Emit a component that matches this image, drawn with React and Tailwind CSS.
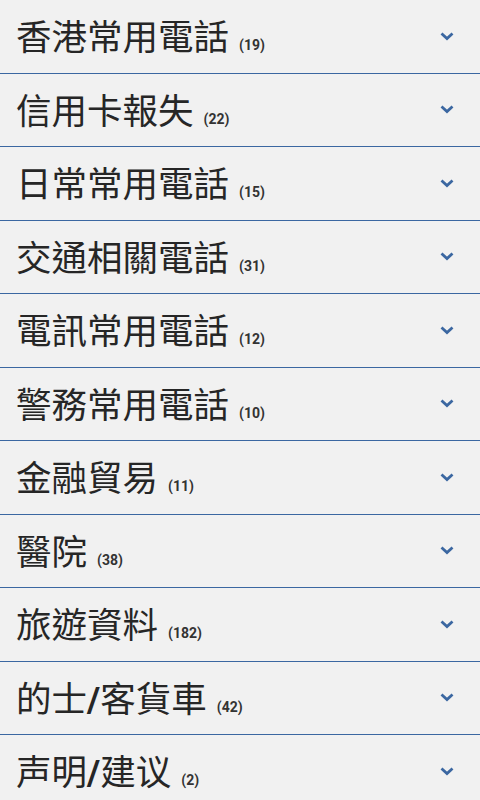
const items = [
  { name: "香港常用電話", count: 19 },
  { name: "信用卡報失", count: 22 },
  { name: "日常常用電話", count: 15 },
  { name: "交通相關電話", count: 31 },
  { name: "電訊常用電話", count: 12 },
  { name: "警務常用電話", count: 10 },
  { name: "金融貿易", count: 11 },
  { name: "醫院", count: 38 },
  { name: "旅遊資料", count: 182 },
  { name: "的士/客貨車", count: 42 },
  { name: "声明/建议", count: 2 },
];

const Chevron = () => (
  <svg width="14" height="9" viewBox="0 0 14 9" className="text-[#3b67a1]">
    <path d="M1.5 1.5 L7 6.5 L12.5 1.5" fill="none" stroke="currentColor" strokeWidth="2.8" />
  </svg>
);

// the slash is drawn in a bold latin face, as on the device
const Name = ({ text }) => {
  const parts = text.split("/");
  return (
    <span className="text-[35.5px] text-[#262626] font-['Noto_Sans_CJK_TC',sans-serif] leading-none">
      {parts.map((p, i) => (
        <span key={i}>
          {i > 0 && <span className="font-bold font-['Roboto',sans-serif]">/</span>}
          {p}
        </span>
      ))}
    </span>
  );
};

export default function App() {
  return (
    <div className="w-[480px] h-[800px] overflow-hidden bg-[#f1f1f1]">
      {items.map((item) => (
        <div
          key={item.name}
          className="h-[73.5px] flex items-center justify-between pl-[16px] pr-[26px] border-b-[1.5px] border-[#3b67a1]"
        >
          <div className="flex items-baseline pt-[1px]">
            <Name text={item.name} />
            <span className="ml-[10px] text-[14px] font-bold text-[#333] font-['Roboto',sans-serif]">
              ({item.count})
            </span>
          </div>
          <Chevron />
        </div>
      ))}
    </div>
  );
}
